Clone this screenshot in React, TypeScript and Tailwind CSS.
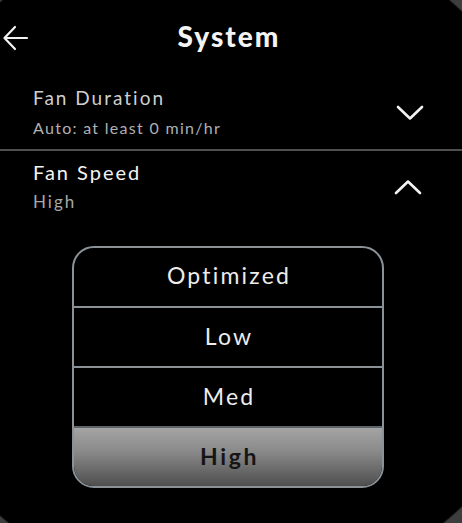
import React from "react";

function ChevronDown() {
  return (
    <svg width="28" height="16" viewBox="0 0 28 16" fill="none">
      <path d="M2 2 L14 13.5 L26 2" stroke="#f2f2f2" strokeWidth="2.6" strokeLinecap="round" strokeLinejoin="round" />
    </svg>
  );
}

function ChevronUp() {
  return (
    <svg width="28" height="16" viewBox="0 0 28 16" fill="none">
      <path d="M2 14 L14 2.5 L26 14" stroke="#f2f2f2" strokeWidth="2.6" strokeLinecap="round" strokeLinejoin="round" />
    </svg>
  );
}

function BackArrow() {
  return (
    <svg width="28" height="28" viewBox="0 0 28 28" fill="none">
      <path d="M4 14 H26 M14 3 L3.5 14 L14 25" stroke="#f2f2f2" strokeWidth="2.2" strokeLinecap="round" strokeLinejoin="round" />
    </svg>
  );
}

export default function App() {
  const options = ["Optimized", "Low", "Med"];
  return (
    <div
      className="w-[462px] h-[523px] overflow-hidden bg-[radial-gradient(circle_342px_at_226px_259px,#000_341px,#3d3d3d_343px)] text-white"
      style={{ fontFamily: "Lato, 'Noto Sans', sans-serif" }}
    >
      {/* header */}
      <div className="grid grid-cols-[40px_1fr_40px] items-center pt-[20px]">
        <div className="pl-[1px] pt-[4px] flex items-center">
          <BackArrow />
        </div>
        <div className="text-center text-[28px] leading-[32px] font-black tracking-[2px] text-[#f4f4f4] -ml-[4px]">
          System
        </div>
        <div />
      </div>

      {/* Fan Duration */}
      <div className="flex items-center justify-between pl-[33px] pr-[38px] mt-[34px]">
        <div className="flex flex-col">
          <div className="text-[19px] leading-[24px] text-[#cfcfcf] tracking-[2px]">Fan Duration</div>
          <div className="text-[16px] leading-[22px] text-[#b0b0b0] mt-[7px] tracking-[1.3px]">Auto: at least 0 min/hr</div>
        </div>
        <ChevronDown />
      </div>
      <div className="h-[2px] bg-[#4f4f4f] mt-[10px]" />

      {/* Fan Speed */}
      <div className="flex items-center justify-between pl-[33px] pr-[40px] mt-[9px]">
        <div className="flex flex-col">
          <div className="text-[20px] leading-[24px] text-[#f4f4f4] tracking-[2px]">Fan Speed</div>
          <div className="text-[17px] leading-[22px] text-[#a8a8a8] mt-[7px] tracking-[2px]">High</div>
        </div>
        <ChevronUp />
      </div>

      {/* dropdown */}
      <div className="ml-[72px] mt-[33px] w-[312px] rounded-[22px] border-2 border-[#8a9298] overflow-hidden flex flex-col">
        {options.map((o, i) => (
          <div
            key={o}
            className={
              i === 0
                ? "h-[58px] flex items-center justify-center pb-[4px] pl-[2px] text-[23px] text-[#ececec] tracking-[2.2px]"
                : "h-[60px] border-t-2 border-[#8a9298] flex items-center justify-center pb-[2px] pl-[2px] text-[23px] text-[#ececec] tracking-[2.2px]"
            }
          >
            {o}
          </div>
        ))}
        <div className="h-[60px] border-t-2 border-[#5d6469] bg-[linear-gradient(to_bottom,#a4a4a4,#8a8a8a_40%,#4e4e4e)] flex items-center justify-center pb-[2px] pl-[3px] text-[23px] font-bold text-[#151515] tracking-[2.6px]">
          High
        </div>
      </div>
    </div>
  );
}
